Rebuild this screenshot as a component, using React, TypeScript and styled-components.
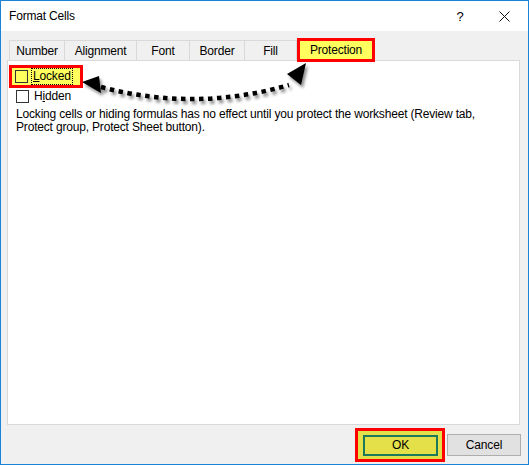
import styled, { createGlobalStyle } from "styled-components";

const GlobalStyle = createGlobalStyle`
  body {
    margin: 0;
    font-family: "Liberation Sans", Arial, sans-serif;
    font-size: 12px;
    letter-spacing: -0.18px;
    color: #000;
  }
`;

const Window = styled.div`
  position: relative;
  width: 529px;
  height: 465px;
  box-sizing: border-box;
  border: 1px solid #1883d7;
  background: #f0f0f0;
  display: flex;
  flex-direction: column;
`;

const TitleBar = styled.div`
  height: 30px;
  background: #fff;
  display: flex;
  align-items: center;
  padding: 0 18px 0 8px;
  .title {
    flex: 1;
  }
  .help {
    width: 40px;
    font-size: 13px;
    text-align: center;
    margin-right: 19px;
  }
`;

const Body = styled.div`
  flex: 1;
  display: flex;
  flex-direction: column;
  padding: 7px 8px 0 6px;
`;

const TabStrip = styled.div`
  display: flex;
  align-items: flex-end;
  height: 22px;
  margin-left: 2px;
`;

const Tab = styled.div<{ $w: number; $first?: boolean; $highlight?: boolean }>`
  width: ${(p) => p.$w}px;
  box-sizing: border-box;
  height: ${(p) => (p.$highlight ? 24 : 20)}px;
  display: flex;
  align-items: center;
  justify-content: center;
  border-top: 1px solid #d9d9d9;
  border-right: 1px solid #d9d9d9;
  border-left: ${(p) => (p.$first ? "1px solid #d9d9d9" : "none")};
  ${(p) =>
    p.$highlight &&
    `
    border: 3px solid #ff0000;
    background: #ffff5e;
    margin-bottom: -2px;
    position: relative;
    z-index: 1;
  `}
`;

const Panel = styled.div`
  height: 365px;
  box-sizing: border-box;
  background: #fff;
  border: 1px solid #d9d9d9;
  padding: 4px 8px 0 1px;
  display: flex;
  flex-direction: column;
  align-items: flex-start;
`;

const HighlightRow = styled.div`
  display: flex;
  align-items: center;
  height: 23px;
  box-sizing: border-box;
  border: 3px solid #ff0000;
  background: #ffff5e;
  padding: 0 8px 0 3px;
  gap: 4px;
`;

const Row = styled.div`
  display: flex;
  align-items: center;
  height: 15px;
  margin: 1px 0 0 7px;
  gap: 4px;
`;

const Check = styled.span<{ $fill?: string }>`
  width: 13px;
  height: 13px;
  box-sizing: border-box;
  border: 1px solid #333;
  background: ${(p) => p.$fill || "#fff"};
`;

const Label = styled.span<{ $focus?: boolean }>`
  padding: 0 1px;
  line-height: 15px;
  ${(p) => p.$focus && "outline: 1px dotted #000;"}
`;

const Note = styled.p`
  margin: 4px 0 0 7px;
  line-height: 13px;
`;

const Footer = styled.div`
  flex: 1;
  display: flex;
  align-items: center;
  justify-content: flex-end;
  margin-right: -1px;
  gap: 2px;
`;

const OkFrame = styled.div`
  border: 3px solid #ff0000;
  background: #e3e04a;
  padding: 4px 4px 3px 5px;
`;

const Button = styled.div<{ $primary?: boolean }>`
  width: ${(p) => (p.$primary ? 75 : 74)}px;
  height: ${(p) => (p.$primary ? 21 : 22)}px;
  box-sizing: border-box;
  display: flex;
  align-items: center;
  justify-content: center;
  border: ${(p) => (p.$primary ? "2px solid #1b7a5b" : "1px solid #adadad")};
  background: ${(p) => (p.$primary ? "#e3e04a" : "#e1e1e1")};
`;

const Arrow = styled.svg`
  position: absolute;
  left: 0;
  top: 0;
  pointer-events: none;
`;

const tabs = [
  { label: "Number", w: 56 },
  { label: "Alignment", w: 72 },
  { label: "Font", w: 53 },
  { label: "Border", w: 55 },
  { label: "Fill", w: 52 },
];

export default function App() {
  return (
    <>
      <GlobalStyle />
      <Window>
        <TitleBar>
          <span className="title">Format Cells</span>
          <span className="help">?</span>
          <svg width="11" height="11" viewBox="0 0 11 11">
            <path d="M0.5 0.5L10.5 10.5M10.5 0.5L0.5 10.5" stroke="#111" strokeWidth="1" />
          </svg>
        </TitleBar>
        <Body>
          <TabStrip>
            {tabs.map((t, i) => (
              <Tab key={t.label} $w={t.w} $first={i === 0}>
                {t.label}
              </Tab>
            ))}
            <Tab $w={78} $highlight>
              Protection
            </Tab>
          </TabStrip>
          <Panel>
            <HighlightRow>
              <Check $fill="#ffff5e" />
              <Label $focus>
                <u>L</u>ocked
              </Label>
            </HighlightRow>
            <Row>
              <Check />
              <Label>
                H<u>i</u>dden
              </Label>
            </Row>
            <Note>
              Locking cells or hiding formulas has no effect until you protect the worksheet (Review tab,
              <br />
              Protect group, Protect Sheet button).
            </Note>
          </Panel>
          <Footer>
            <OkFrame>
              <Button $primary>OK</Button>
            </OkFrame>
            <Button>Cancel</Button>
          </Footer>
        </Body>
        <Arrow width="529" height="465" viewBox="0 0 529 465">
          <defs>
            <filter id="sh" x="-20%" y="-50%" width="140%" height="200%">
              <feDropShadow dx="2" dy="3" stdDeviation="1.6" floodColor="#000" floodOpacity="0.45" />
            </filter>
          </defs>
          <g filter="url(#sh)">
            <path
              d="M100 86 Q195 111 288 84"
              fill="none"
              stroke="#000"
              strokeWidth="4.5"
              strokeDasharray="4.5 4.5"
            />
            <path d="M81 81 L98 75 L100 92 Z" fill="#000" />
            <path d="M305 62 L300 84 L286 73 Z" fill="#000" />
          </g>
        </Arrow>
      </Window>
    </>
  );
}
